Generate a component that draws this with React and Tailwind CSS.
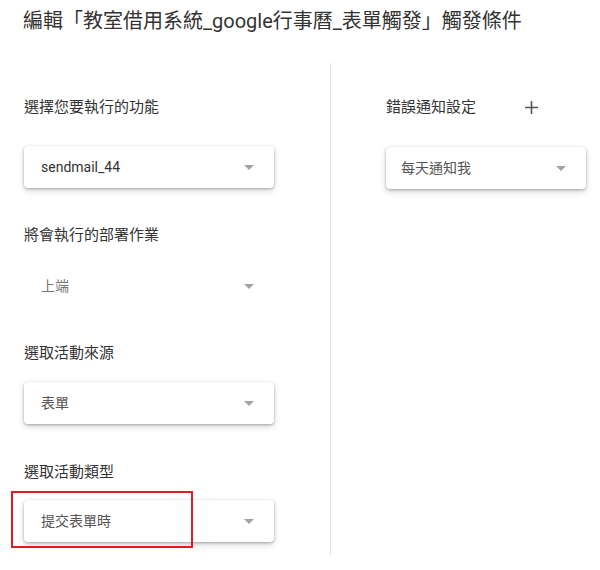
import React from 'react';

const font = { fontFamily: 'Roboto, "Noto Sans CJK TC", sans-serif' };

function Arrow() {
  return (
    <svg width="10" height="5" viewBox="0 0 10 5" className="shrink-0">
      <path d="M0 0 L10 0 L5 5 Z" fill="#a3a3a3" />
    </svg>
  );
}

function Select({ value, flat, width = 'w-[250px]', textColor = 'text-[#555]', pl = 'pl-[17px]' }) {
  return (
    <div
      className={`${width} h-[42px] flex items-center justify-between ${pl} pr-[20px] rounded-[4px] bg-white ${
        flat ? '' : 'shadow-[0_1px_3px_rgba(0,0,0,0.28),0_3px_7px_rgba(0,0,0,0.14)]'
      }`}
    >
      <span className={`text-[14px] ${textColor}`}>{value}</span>
      <Arrow />
    </div>
  );
}

function Label({ children, className = '' }) {
  return <div className={`text-[15px] leading-[22px] text-[#333] ${className}`}>{children}</div>;
}

export default function App() {
  return (
    <div className="w-[600px] h-[570px] bg-white overflow-hidden" style={font}>
      <h1 className="pl-[23px] pt-[7px] text-[20px] leading-[28px] text-[#333] font-normal">
        編輯「教室借用系統_google行事曆_表單觸發」觸發條件
      </h1>

      <div className="flex mt-[28px]">
        {/* left column */}
        <div className="w-[331px] h-[492px] pl-[24px] border-r border-[#e2e2e2]">
          <Label className="mt-[33px]">選擇您要執行的功能</Label>
          <div className="mt-[28px]">
            <Select value="sendmail_44" textColor="text-[#333]" />
          </div>

          <Label className="mt-[36px]">將會執行的部署作業</Label>
          <div className="mt-[19px]">
            <Select value="上端" flat textColor="text-[#777]" />
          </div>

          <Label className="mt-[35px]">選取活動來源</Label>
          <div className="mt-[18px]">
            <Select value="表單" />
          </div>

          <Label className="mt-[37px]">選取活動類型</Label>
          <div className="mt-[17px] relative">
            <Select value="提交表單時" />
            <span className="absolute left-[-13px] top-[-9px] w-[182px] h-[57px] border-2 border-[#dd1c24]" />
          </div>
        </div>

        {/* right column */}
        <div className="pl-[55px]">
          <div className="mt-[33px] flex items-center">
            <Label>錯誤通知設定</Label>
            <svg width="13" height="13" viewBox="0 0 13 13" className="ml-[49px]">
              <path d="M6.5 0 V13 M0 6.5 H13" stroke="#555" strokeWidth="1.6" />
            </svg>
          </div>
          <div className="mt-[29px]">
            <Select value="每天通知我" width="w-[200px]" pl="pl-[15px]" />
          </div>
        </div>
      </div>
    </div>
  );
}
